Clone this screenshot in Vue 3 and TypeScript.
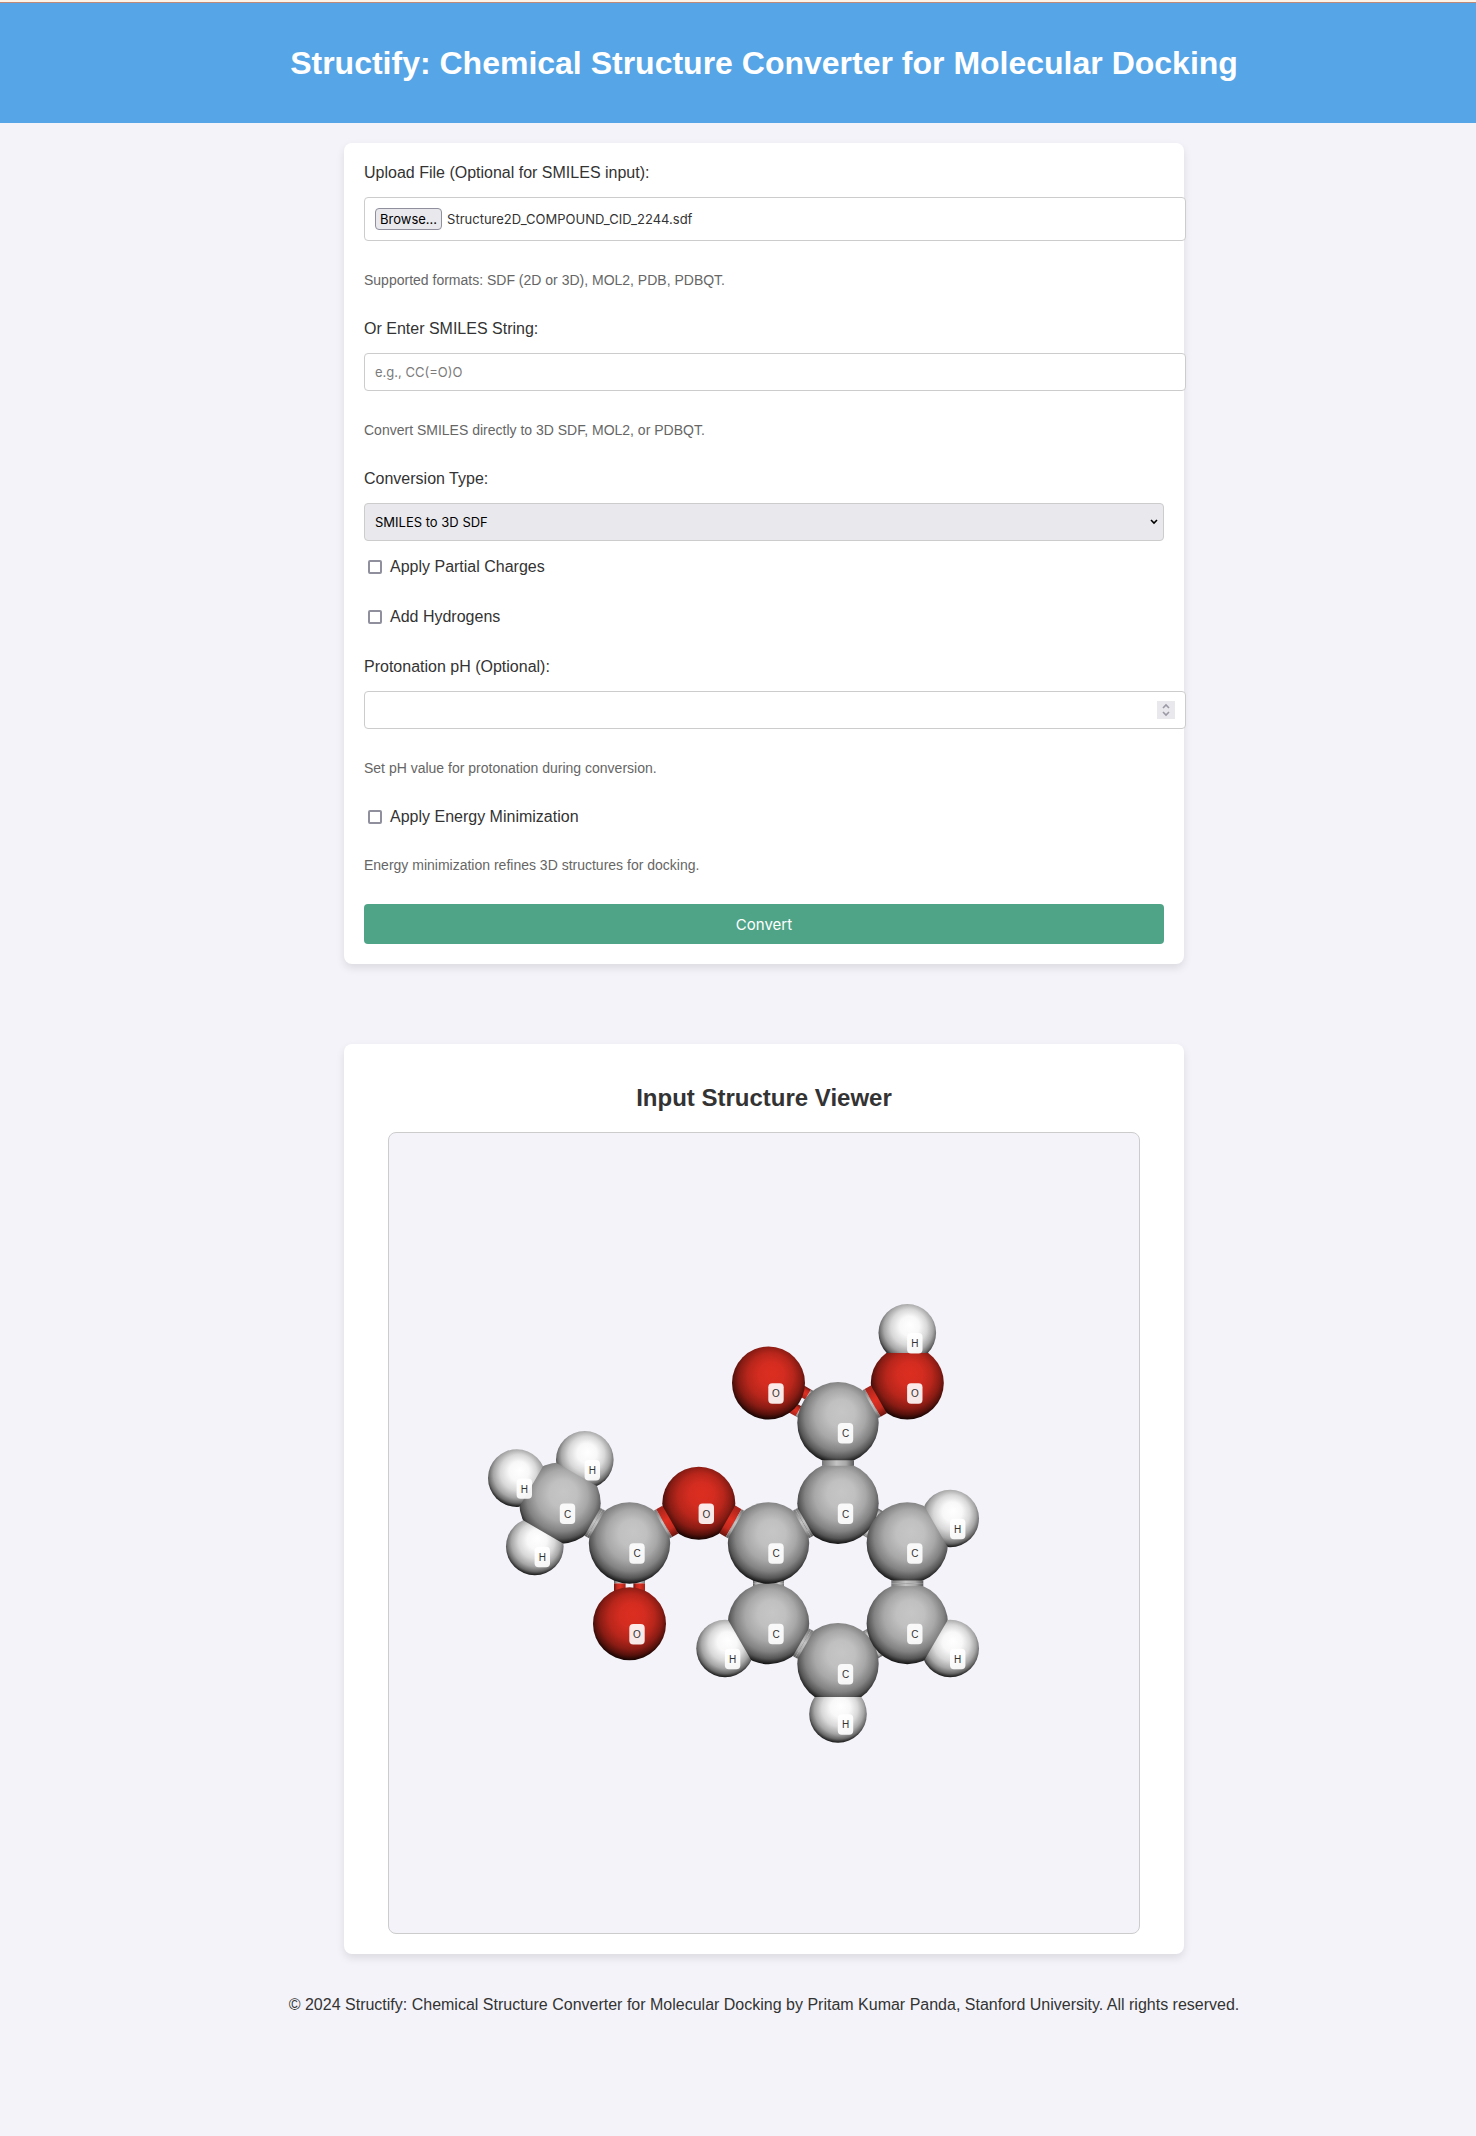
<script setup lang="ts">
import { ref } from 'vue'

type Element = 'C' | 'O' | 'H'

interface Atom {
  el: Element
  x: number
  y: number
}

interface Bond {
  a: number
  b: number
  order: 1 | 2
}

const title = 'Structify: Chemical Structure Converter for Molecular Docking'
const fileName = ref('Structure2D_COMPOUND_CID_2244.sdf')
const smiles = ref('')
const conversion = ref('smiles-3d')
const charges = ref(false)
const hydrogens = ref(false)
const minimize = ref(false)
const ph = ref<number | ''>('')

const conversions = [
  { value: 'smiles-3d', label: 'SMILES to 3D SDF' },
  { value: 'smiles-mol2', label: 'SMILES to MOL2' },
  { value: 'smiles-pdbqt', label: 'SMILES to PDBQT' },
]

function pickFile(event: Event) {
  const file = (event.target as HTMLInputElement).files?.[0]
  if (file) fileName.value = file.name
}

function stepPh(delta: number) {
  ph.value = Math.min(14, Math.max(0, Number(ph.value || 0) + delta))
}

const radius: Record<Element, number> = { C: 40.7, O: 36.5, H: 28.8 }

const atoms: Atom[] = [
  { el: 'C', x: 171, y: 370.2 },
  { el: 'C', x: 240.5, y: 410 },
  { el: 'O', x: 240.5, y: 490.8 },
  { el: 'O', x: 309.8, y: 370.2 },
  { el: 'C', x: 379.5, y: 490.5 },
  { el: 'C', x: 379.5, y: 410 },
  { el: 'C', x: 449, y: 370.2 },
  { el: 'C', x: 449, y: 530.7 },
  { el: 'C', x: 518.3, y: 490.5 },
  { el: 'C', x: 518.3, y: 410 },
  { el: 'O', x: 379.5, y: 250 },
  { el: 'C', x: 449, y: 289.8 },
  { el: 'O', x: 518.3, y: 250 },
  { el: 'H', x: 195.8, y: 326.8 },
  { el: 'H', x: 127.8, y: 345.1 },
  { el: 'H', x: 145.8, y: 413.5 },
  { el: 'H', x: 336.1, y: 515.5 },
  { el: 'H', x: 449, y: 581 },
  { el: 'H', x: 561.2, y: 515.5 },
  { el: 'H', x: 561.2, y: 385.5 },
  { el: 'H', x: 518.3, y: 199.8 },
]

const bonds: Bond[] = [
  { a: 0, b: 1, order: 1 },
  { a: 1, b: 2, order: 2 },
  { a: 1, b: 3, order: 1 },
  { a: 3, b: 5, order: 1 },
  { a: 5, b: 4, order: 2 },
  { a: 5, b: 6, order: 1 },
  { a: 4, b: 7, order: 1 },
  { a: 7, b: 8, order: 2 },
  { a: 8, b: 9, order: 1 },
  { a: 9, b: 6, order: 2 },
  { a: 6, b: 11, order: 1 },
  { a: 11, b: 10, order: 2 },
  { a: 11, b: 12, order: 1 },
]

const heavy = atoms.filter((atom) => atom.el !== 'H')

// Bonds are laid out along +x from atom a, then rotated into place.
function layBond(bond: Bond, halfWidth: number, inset: boolean) {
  const a = atoms[bond.a]
  const b = atoms[bond.b]
  const length = Math.hypot(b.x - a.x, b.y - a.y)
  const trim = (el: Element) => (inset ? Math.sqrt(radius[el] ** 2 - halfWidth ** 2) : 20)
  const start = trim(a.el)
  const end = length - trim(b.el)
  return {
    transform: `translate(${a.x} ${a.y}) rotate(${(Math.atan2(b.y - a.y, b.x - a.x) * 180) / Math.PI})`,
    start,
    mid: length / 2,
    end,
    fillA: `url(#tube-${a.el})`,
    fillB: `url(#tube-${b.el})`,
  }
}

const doubleBonds = bonds.filter((b) => b.order === 2).map((b) => layBond(b, 16, false))
const singleBonds = bonds.filter((b) => b.order === 1).map((b) => layBond(b, 16, true))

// A hydrogen sinks into its neighbour; only the part past the shared chord shows.
const caps = atoms
  .filter((atom) => atom.el === 'H')
  .map((h) => {
    const parent = heavy.reduce((best, atom) =>
      Math.hypot(atom.x - h.x, atom.y - h.y) < Math.hypot(best.x - h.x, best.y - h.y) ? atom : best,
    )
    const dx = h.x - parent.x
    const dy = h.y - parent.y
    const dist = Math.hypot(dx, dy)
    const cut = dist - (dist ** 2 + radius[parent.el] ** 2 - radius.H ** 2) / (2 * dist)
    const ux = dx / dist
    const uy = dy / dist
    const px = h.x - ux * cut
    const py = h.y - uy * cut
    return {
      x: h.x,
      y: h.y,
      points: [
        [px - uy * 40, py + ux * 40],
        [px + uy * 40, py - ux * 40],
        [px + uy * 40 + ux * 80, py - ux * 40 + uy * 80],
        [px - uy * 40 + ux * 80, py + ux * 40 + uy * 80],
      ]
        .map((p) => p.join(','))
        .join(' '),
    }
  })
</script>

<template>
  <div class="page">
    <header class="banner">
      <h1>{{ title }}</h1>
    </header>

    <main>
      <form class="card" @submit.prevent>
        <label class="caption" for="file">Upload File (Optional for SMILES input):</label>
        <div class="field file">
          <span class="browse">Browse...</span>
          <span>{{ fileName }}</span>
          <input id="file" type="file" @change="pickFile" />
        </div>
        <p class="help">Supported formats: SDF (2D or 3D), MOL2, PDB, PDBQT.</p>

        <label class="caption" for="smiles">Or Enter SMILES String:</label>
        <input id="smiles" v-model="smiles" class="field" type="text" placeholder="e.g., CC(=O)O" />
        <p class="help">Convert SMILES directly to 3D SDF, MOL2, or PDBQT.</p>

        <label class="caption" for="conversion">Conversion Type:</label>
        <div class="picker">
          <select id="conversion" v-model="conversion">
            <option v-for="c in conversions" :key="c.value" :value="c.value">{{ c.label }}</option>
          </select>
          <svg viewBox="0 0 8 6" width="8" height="6" aria-hidden="true">
            <path d="M1 1l3 3 3-3" fill="none" stroke="#000" stroke-width="1.6" />
          </svg>
        </div>

        <label class="check"><input v-model="charges" type="checkbox" />Apply Partial Charges</label>
        <label class="check"><input v-model="hydrogens" type="checkbox" />Add Hydrogens</label>

        <label class="caption" for="ph">Protonation pH (Optional):</label>
        <div class="field number">
          <input id="ph" v-model="ph" type="number" min="0" max="14" />
          <div class="spinner">
            <button type="button" aria-label="Increase pH" @click="stepPh(1)">
              <svg viewBox="0 0 18 9" width="18" height="9">
                <path d="M6 7l3-3 3 3" fill="none" stroke="#9a99a5" stroke-width="1.6" />
              </svg>
            </button>
            <button type="button" aria-label="Decrease pH" @click="stepPh(-1)">
              <svg viewBox="0 0 18 9" width="18" height="9">
                <path d="M6 2l3 3 3-3" fill="none" stroke="#9a99a5" stroke-width="1.6" />
              </svg>
            </button>
          </div>
        </div>
        <p class="help">Set pH value for protonation during conversion.</p>

        <label class="check"><input v-model="minimize" type="checkbox" />Apply Energy Minimization</label>
        <p class="help">Energy minimization refines 3D structures for docking.</p>

        <button class="convert" type="submit">Convert</button>
      </form>

      <section class="card viewer-card">
        <h2>Input Structure Viewer</h2>
        <div class="viewer">
          <svg class="molecule" viewBox="0 0 750 800" role="img" aria-label="Aspirin structure">
            <defs>
              <radialGradient id="ball-C" cx="0.51" cy="0.44" r="0.57" fx="0.55" fy="0.36">
                <stop offset="0" stop-color="#c6c6c6" />
                <stop offset="0.3" stop-color="#c0c0c0" />
                <stop offset="0.55" stop-color="#a8a8a8" />
                <stop offset="0.75" stop-color="#828282" />
                <stop offset="0.88" stop-color="#555" />
                <stop offset="1" stop-color="#080808" />
              </radialGradient>
              <radialGradient id="ball-O" cx="0.51" cy="0.44" r="0.57" fx="0.55" fy="0.36">
                <stop offset="0" stop-color="#dc2e20" />
                <stop offset="0.3" stop-color="#d42c20" />
                <stop offset="0.55" stop-color="#b8261b" />
                <stop offset="0.75" stop-color="#891c14" />
                <stop offset="0.88" stop-color="#55110b" />
                <stop offset="1" stop-color="#0a0201" />
              </radialGradient>
              <radialGradient id="ball-H" cx="0.51" cy="0.44" r="0.57" fx="0.55" fy="0.36">
                <stop offset="0" stop-color="#ffffff" />
                <stop offset="0.3" stop-color="#f8f8f8" />
                <stop offset="0.55" stop-color="#d8d8d8" />
                <stop offset="0.75" stop-color="#a6a6a6" />
                <stop offset="0.88" stop-color="#6a6a6a" />
                <stop offset="1" stop-color="#080808" />
              </radialGradient>
              <linearGradient id="tube-C" x1="0" y1="0" x2="0" y2="1">
                <stop offset="0" stop-color="#777" />
                <stop offset="0.45" stop-color="#c4c4c4" />
                <stop offset="0.75" stop-color="#a8a8a8" />
                <stop offset="1" stop-color="#5a5a5a" />
              </linearGradient>
              <linearGradient id="tube-O" x1="0" y1="0" x2="0" y2="1">
                <stop offset="0" stop-color="#a5231a" />
                <stop offset="0.45" stop-color="#e03022" />
                <stop offset="0.75" stop-color="#c42a1e" />
                <stop offset="1" stop-color="#6a150f" />
              </linearGradient>
              <clipPath v-for="(cap, i) in caps" :id="`cap-${i}`" :key="i">
                <polygon :points="cap.points" />
              </clipPath>
            </defs>

            <g v-for="(bond, i) in doubleBonds" :key="`d${i}`" :transform="bond.transform">
              <template v-for="offset in [-15.5, 3.9]" :key="offset">
                <rect :x="bond.start" :y="offset" :width="bond.mid - bond.start" height="11.6" :fill="bond.fillA" />
                <rect :x="bond.mid" :y="offset" :width="bond.end - bond.mid" height="11.6" :fill="bond.fillB" />
              </template>
            </g>

            <circle
              v-for="(atom, i) in heavy"
              :key="`a${i}`"
              :cx="atom.x"
              :cy="atom.y"
              :r="radius[atom.el]"
              :fill="`url(#ball-${atom.el})`"
            />

            <g v-for="(bond, i) in singleBonds" :key="`s${i}`" :transform="bond.transform">
              <rect :x="bond.start" y="-16" :width="bond.mid - bond.start" height="32" :fill="bond.fillA" />
              <rect :x="bond.mid" y="-16" :width="bond.end - bond.mid" height="32" :fill="bond.fillB" />
            </g>

            <circle
              v-for="(cap, i) in caps"
              :key="`h${i}`"
              :cx="cap.x"
              :cy="cap.y"
              :r="radius.H"
              fill="url(#ball-H)"
              :clip-path="`url(#cap-${i})`"
            />

            <g v-for="(atom, i) in atoms" :key="`t${i}`" class="tag">
              <rect :x="atom.x - 0.2" :y="atom.y + 0.3" width="15.4" height="20.4" rx="4" />
              <text :x="atom.x + 7.5" :y="atom.y + 14.4">{{ atom.el }}</text>
            </g>
          </svg>
        </div>
      </section>
    </main>

    <footer>
      © 2024 Structify: Chemical Structure Converter for Molecular Docking by Pritam Kumar Panda, Stanford
      University. All rights reserved.
    </footer>
  </div>
</template>

<style>
body {
  margin: 0;
  background: #f4f3f9;
}
</style>

<style scoped>
.page {
  min-height: 100vh;
  color: #333;
  font-family: 'Liberation Sans', Arial, sans-serif;
  font-size: 16px;
  line-height: 20px;
}

.banner {
  margin-top: 2px;
  padding: 42px 0 42px 52px;
  border-top: 1px solid #c08a78;
  background: #55a5e7;
  box-shadow: 0 -2px 0 #fdf3e6;
  color: #fff;
  text-align: center;
}

h1 {
  margin: 0;
  font-size: 32px;
  line-height: 36px;
}

main {
  display: flex;
  flex-direction: column;
  align-items: center;
  gap: 80px;
  padding: 20px 0 41px 52px;
}

.card {
  box-sizing: border-box;
  width: 100%;
  max-width: 840px;
  padding: 20px;
  border-radius: 8px;
  background: #fff;
  box-shadow: 0 4px 8px rgba(0, 0, 0, 0.1);
}

.caption {
  display: block;
  margin-bottom: 14px;
}

.field {
  display: block;
  box-sizing: border-box;
  width: calc(100% + 22px);
  height: 38px;
  padding: 0 10px;
  border: 1px solid #ccc;
  border-radius: 4px;
  background: #fff;
  color: #333;
  font-family: Inter, sans-serif;
  font-size: 13px;
}

.field::placeholder {
  color: #7b7b7b;
}

.file {
  position: relative;
  display: flex;
  align-items: center;
  gap: 5px;
  height: 44px;
}

.file input {
  position: absolute;
  inset: 0;
  width: 100%;
  opacity: 0;
}

.browse {
  box-sizing: border-box;
  height: 22px;
  padding: 0 4px;
  border: 1px solid #8f8f9d;
  border-radius: 4px;
  background: #e9e9ed;
  color: #000;
}

.help {
  margin: 29px 0;
  color: #666;
  font-size: 14px;
}

.picker {
  display: flex;
  align-items: center;
}

.picker select {
  flex: 1;
  height: 38px;
  padding: 0 10px;
  border: 1px solid #ccc;
  border-radius: 4px;
  appearance: none;
  background: #e9e9ed;
  color: #000;
  font-family: Inter, sans-serif;
  font-size: 13px;
}

.picker svg {
  margin-left: -14px;
  margin-right: 6px;
  pointer-events: none;
}

.check {
  display: flex;
  align-items: center;
  gap: 8px;
  margin-bottom: 30px;
  padding-left: 4px;
}

.picker + .check {
  margin-top: 16px;
}

.check + .help {
  margin-top: -2px;
}

.check input {
  width: 14px;
  height: 14px;
  margin: 0;
  border: 2px solid #8f8f9d;
  border-radius: 2px;
  appearance: none;
  background: #fff;
}

.check input:checked {
  background: #0060df;
}

.number {
  display: flex;
  align-items: center;
}

.number input {
  flex: 1;
  min-width: 0;
  padding: 0;
  border: 0;
  outline: 0;
  appearance: textfield;
  color: inherit;
  font: inherit;
}

.spinner {
  display: flex;
  flex-direction: column;
  background: #e9e9ed;
}

.spinner button {
  display: flex;
  padding: 0;
  border: 0;
  background: none;
}

.convert {
  display: block;
  width: 100%;
  height: 40px;
  padding: 0;
  border: 0;
  border-radius: 4px;
  background: #4fa387;
  color: #fff;
  font-family: Inter, sans-serif;
  font-size: 15px;
}

.viewer-card {
  padding: 40px 44px 20px;
}

h2 {
  margin: 0 0 20px;
  font-size: 24px;
  line-height: 28px;
  text-align: center;
}

.viewer {
  border: 1px solid #ccc;
  border-radius: 8px;
  background: #f4f3f9;
}

.molecule {
  display: block;
  width: 100%;
}

.tag rect {
  fill: #fff;
  fill-opacity: 0.9;
}

.tag text {
  fill: #333;
  font-size: 10px;
  text-anchor: middle;
}

footer {
  padding: 0 0 120px 52px;
  text-align: center;
}
</style>
